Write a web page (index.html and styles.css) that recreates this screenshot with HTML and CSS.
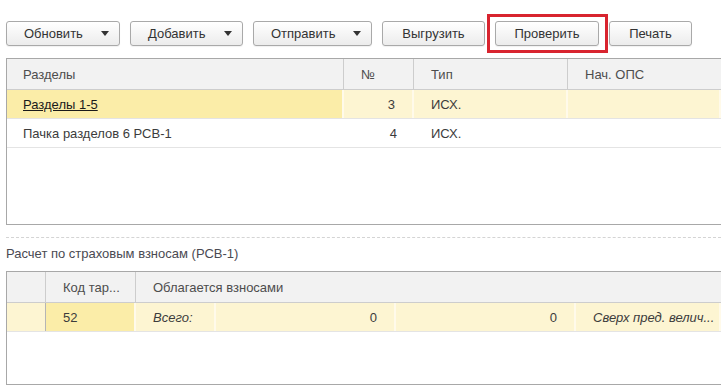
FILE: index.html
```html
<!DOCTYPE html>
<html lang="ru">
<head>
    <meta charset="UTF-8">
    <title>РСВ-1</title>
    <link rel="stylesheet" href="styles.css">
</head>
<body>

    <div class="toolbar">
        <button class="btn btn-menu w-upd"><span>Обновить</span><svg class="arrow" width="8" height="5" viewBox="0 0 8 5"><path d="M0 0H8L4 5Z" fill="#333"/></svg></button>
        <button class="btn btn-menu w-add"><span>Добавить</span><svg class="arrow" width="8" height="5" viewBox="0 0 8 5"><path d="M0 0H8L4 5Z" fill="#333"/></svg></button>
        <button class="btn btn-menu w-send"><span>Отправить</span><svg class="arrow" width="8" height="5" viewBox="0 0 8 5"><path d="M0 0H8L4 5Z" fill="#333"/></svg></button>
        <button class="btn w-unload">Выгрузить</button>
        <button class="btn w-check marked">Проверить</button>
        <button class="btn w-print">Печать</button>
    </div>

    <!-- Разделы -->
    <div class="grid grid-top">
        <div class="row head">
            <div class="cell c-name">Разделы</div>
            <div class="cell c-num">№</div>
            <div class="cell c-type">Тип</div>
            <div class="cell c-ops">Нач. ОПС</div>
        </div>
        <div class="row selected">
            <div class="cell c-name current"><a href="#" class="link">Разделы 1-5</a></div>
            <div class="cell c-num right">3</div>
            <div class="cell c-type">ИСХ.</div>
            <div class="cell c-ops"></div>
        </div>
        <div class="row">
            <div class="cell c-name">Пачка разделов 6 РСВ-1</div>
            <div class="cell c-num right">4</div>
            <div class="cell c-type">ИСХ.</div>
            <div class="cell c-ops"></div>
        </div>
    </div>

    <div class="separator"></div>
    <div class="group-title">Расчет по страховым взносам (РСВ-1)</div>

    <!-- Расчет -->
    <div class="grid grid-bottom">
        <div class="row head">
            <div class="cell c-mark"></div>
            <div class="cell c-code">Код тар...</div>
            <div class="cell c-rest">Облагается взносами</div>
        </div>
        <div class="row selected">
            <div class="cell c-mark"></div>
            <div class="cell c-code current">52</div>
            <div class="cell c-total italic">Всего:</div>
            <div class="cell c-sum1 right">0</div>
            <div class="cell c-sum2 right">0</div>
            <div class="cell c-over italic">Сверх пред. велич...</div>
        </div>
    </div>

</body>
</html>
```

FILE: styles.css
```css
* {
    box-sizing: border-box;
    margin: 0;
    padding: 0;
}

body {
    width: 721px;
    height: 387px;
    overflow: hidden;
    background: #fff;
    font-family: Arial, "Liberation Sans", sans-serif;
    font-size: 13px;
    color: #3c3c3c;
}

/* Toolbar */
.toolbar {
    display: flex;
    gap: 10px;
    padding: 21px 0 0 6px;
}

.btn {
    height: 25px;
    border: 1px solid #a9a9a9;
    border-radius: 3px;
    background: linear-gradient(#ffffff, #ececec);
    font-family: Arial, "Liberation Sans", sans-serif;
    font-size: 13px;
    color: #333;
    display: flex;
    align-items: center;
    justify-content: center;
    box-shadow: 0 1px 1px rgba(0, 0, 0, 0.06);
}

.btn-menu {
    justify-content: space-between;
    padding: 0 10px 0 17px;
}

.arrow {
    display: block;
}

.w-upd { width: 114px; }
.w-add { width: 113px; }
.w-send { width: 119px; }
.w-unload { width: 103px; }
.w-check { width: 104px; }
.w-print { width: 83px; }

/* red frame round the highlighted button */
.marked {
    position: relative;
}

.marked::after {
    content: "";
    position: absolute;
    top: -8px;
    bottom: -8px;
    left: -9px;
    right: -10px;
    border: 3px solid #d8242f;
}

/* Grids */
.grid {
    margin-left: 6px;
    width: 715px;
    border: 1px solid #a8a8a8;
    border-right: none;
}

.grid-top {
    margin-top: 12px;
    height: 167px;
}

.grid-bottom {
    height: 114px;
}

.row {
    display: flex;
    height: 29px;
    border-bottom: 1px solid #e4e4e4;
}

.row.head {
    height: 31px;
    background: #f2f2f2;
    border-bottom: 1px solid #cdcdcd;
    color: #4d4d4d;
}

.cell {
    display: flex;
    align-items: center;
    padding: 0 17px;
    white-space: nowrap;
    overflow: hidden;
}

.head .cell {
    border-right: 1px solid #cdcdcd;
}

.head .cell:last-child {
    border-right: none;
}

.right {
    justify-content: flex-end;
}

.italic {
    font-style: italic;
}

.selected .cell {
    background: #fdf5d2;
    border-right: 2px solid #fffaea;
}

.selected .cell.current {
    background: #fbeda8;
}

.link {
    color: #1a1a1a;
    text-decoration: underline;
}

.c-name { width: 337px; padding-left: 16px; }
.c-num { width: 70px; }
.c-type { width: 154px; }
.c-ops { flex: 1; }

.c-mark { width: 39px; }
.c-code { width: 90px; }
.c-rest { flex: 1; }
.c-total { width: 80px; }
.c-sum1 { width: 180px; }
.c-sum2 { width: 180px; }
.c-over { flex: 1; }

.selected .c-mark {
    border-right: 1px solid #b5b5b5;
}

/* Group */
.separator {
    margin: 12px 0 0 6px;
    border-top: 1px dashed #d4d4d4;
}

.group-title {
    padding: 8px 0 9px 6px;
    color: #4a4a52;
    line-height: 16px;
}
```
